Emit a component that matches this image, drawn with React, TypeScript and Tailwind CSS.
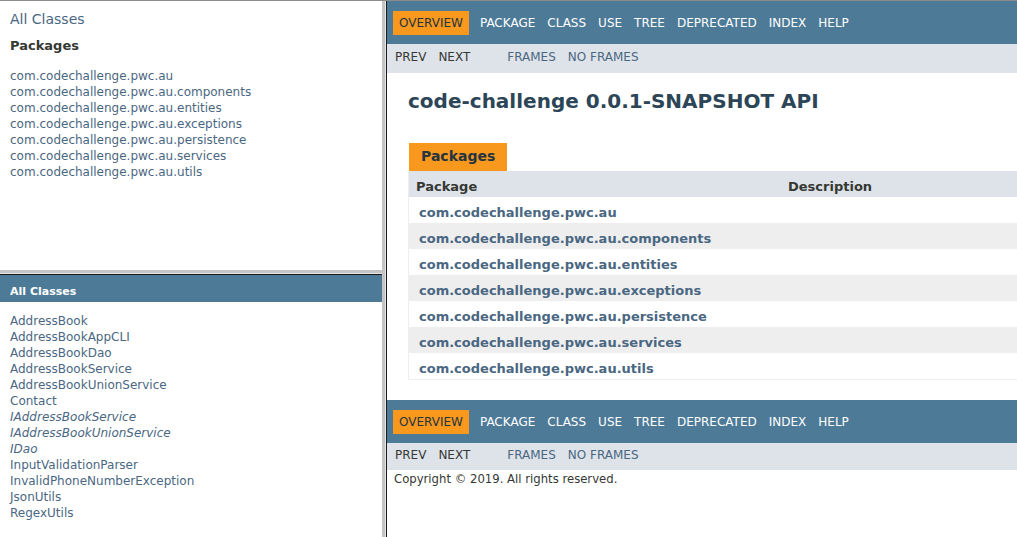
const packages = [
  'com.codechallenge.pwc.au',
  'com.codechallenge.pwc.au.components',
  'com.codechallenge.pwc.au.entities',
  'com.codechallenge.pwc.au.exceptions',
  'com.codechallenge.pwc.au.persistence',
  'com.codechallenge.pwc.au.services',
  'com.codechallenge.pwc.au.utils',
];

const classes: { name: string; iface?: boolean }[] = [
  { name: 'AddressBook' },
  { name: 'AddressBookAppCLI' },
  { name: 'AddressBookDao' },
  { name: 'AddressBookService' },
  { name: 'AddressBookUnionService' },
  { name: 'Contact' },
  { name: 'IAddressBookService', iface: true },
  { name: 'IAddressBookUnionService', iface: true },
  { name: 'IDao', iface: true },
  { name: 'InputValidationParser' },
  { name: 'InvalidPhoneNumberException' },
  { name: 'JsonUtils' },
  { name: 'RegexUtils' },
];

const navItems = ['Package', 'Class', 'Use', 'Tree', 'Deprecated', 'Index', 'Help'];

function TopNav() {
  return (
    <div className="h-[43px] bg-[#4d7a97] pt-[10px] pl-[6px] text-[12px] leading-[14px] text-white">
      <ul className="flex">
        <li className="mr-[5px] bg-[#f8981d] px-[6px] py-[5px] text-[#253441]">OVERVIEW</li>
        {navItems.map((n) => (
          <li key={n} className="px-[6px] py-[5px] uppercase">
            {n}
          </li>
        ))}
      </ul>
    </div>
  );
}

function SubNav({ tall }: { tall?: boolean }) {
  return (
    <div className={`${tall ? 'h-[29px] pt-px' : 'h-[27px]'} bg-[#dee3e9] pl-[2px] text-[12px] leading-[14px]`}>
      <ul className="flex">
        <li className="px-[6px] py-[5px] text-[#353833]">PREV</li>
        <li className="px-[6px] py-[5px] text-[#353833]">NEXT</li>
        <li className="ml-[25px] px-[6px] py-[5px] text-[#4a6782]">FRAMES</li>
        <li className="px-[6px] py-[5px] text-[#4a6782]">NO FRAMES</li>
      </ul>
    </div>
  );
}

export default function App() {
  return (
    <div
      className="flex h-[537px] w-[1017px] overflow-hidden border-t border-[#8c8c8c] bg-white text-[#353833]"
      style={{ fontFamily: '"DejaVu Sans", Arial, Helvetica, sans-serif' }}
    >
      {/* left frames */}
      <div className="flex w-[382px] flex-col">
        <div className="h-[269px] pl-[10px] pt-[10px]">
          <div className="text-[14px] leading-[16px] text-[#4a6782]">All Classes</div>
          <div className="mt-[11px] text-[13px] font-bold leading-[16px]">Packages</div>
          <ul className="mt-[14px] text-[12px] leading-[16px] text-[#4a6782]">
            {packages.map((p) => (
              <li key={p}>{p}</li>
            ))}
          </ul>
        </div>
        <div className="h-[3px] bg-[#c4c4c4]" />
        <div className="h-px bg-[#e6e6e6]" />
        <div className="h-px bg-[#1a1a1a]" />
        <div className="flex-1">
          <div className="h-[27px] bg-[#4d7a97] pl-[10px] pt-[10px] text-[11px] font-bold leading-[13px] text-white">
            All Classes
          </div>
          <ul className="mt-[11px] pl-[10px] text-[12px] leading-[16px] text-[#4a6782]">
            {classes.map((c) => (
              <li key={c.name} className={c.iface ? 'italic' : ''}>
                {c.name}
              </li>
            ))}
          </ul>
        </div>
      </div>

      {/* frame divider */}
      <div className="w-[3px] bg-[#c4c4c4]" />
      <div className="w-px bg-[#e6e6e6]" />
      <div className="w-px bg-[#1a1a1a]" />

      {/* main frame */}
      <div className="flex-1 overflow-hidden">
        <TopNav />
        <SubNav tall />

        <h1 className="ml-[21px] mt-[16px] text-[20px] font-bold leading-[24px] text-[#2c4557]">
          code-challenge 0.0.1-SNAPSHOT API
        </h1>

        <div className="ml-[22px] mt-[30px] w-fit bg-[#f8981d] px-[12px] pb-[7px] pt-[5px] text-[14px] font-bold leading-[16px] text-[#253441]">
          Packages
        </div>
        <div className="ml-[21px] border-b border-l border-[#eeeeee] text-[13px] leading-[15px]">
          <div className="flex bg-[#dee3e9] pb-[3px] pt-[8px] font-bold">
            <div className="w-[372px] pl-[7px]">Package</div>
            <div className="pl-[7px]">Description</div>
          </div>
          {packages.map((p, i) => (
            <div key={p} className={`flex pb-[3px] pt-[8px] ${i % 2 ? 'bg-[#eeeeef]' : 'bg-white'}`}>
              <div className="w-[372px] pl-[10px] font-bold text-[#4a6782]">{p}</div>
              <div className="flex-1" />
            </div>
          ))}
        </div>

        <div className="mt-[20px]">
          <TopNav />
          <SubNav />
          <p className="ml-[7px] mt-[2px] text-[11.67px] leading-[14px]">Copyright © 2019. All rights reserved.</p>
        </div>
      </div>
    </div>
  );
}
